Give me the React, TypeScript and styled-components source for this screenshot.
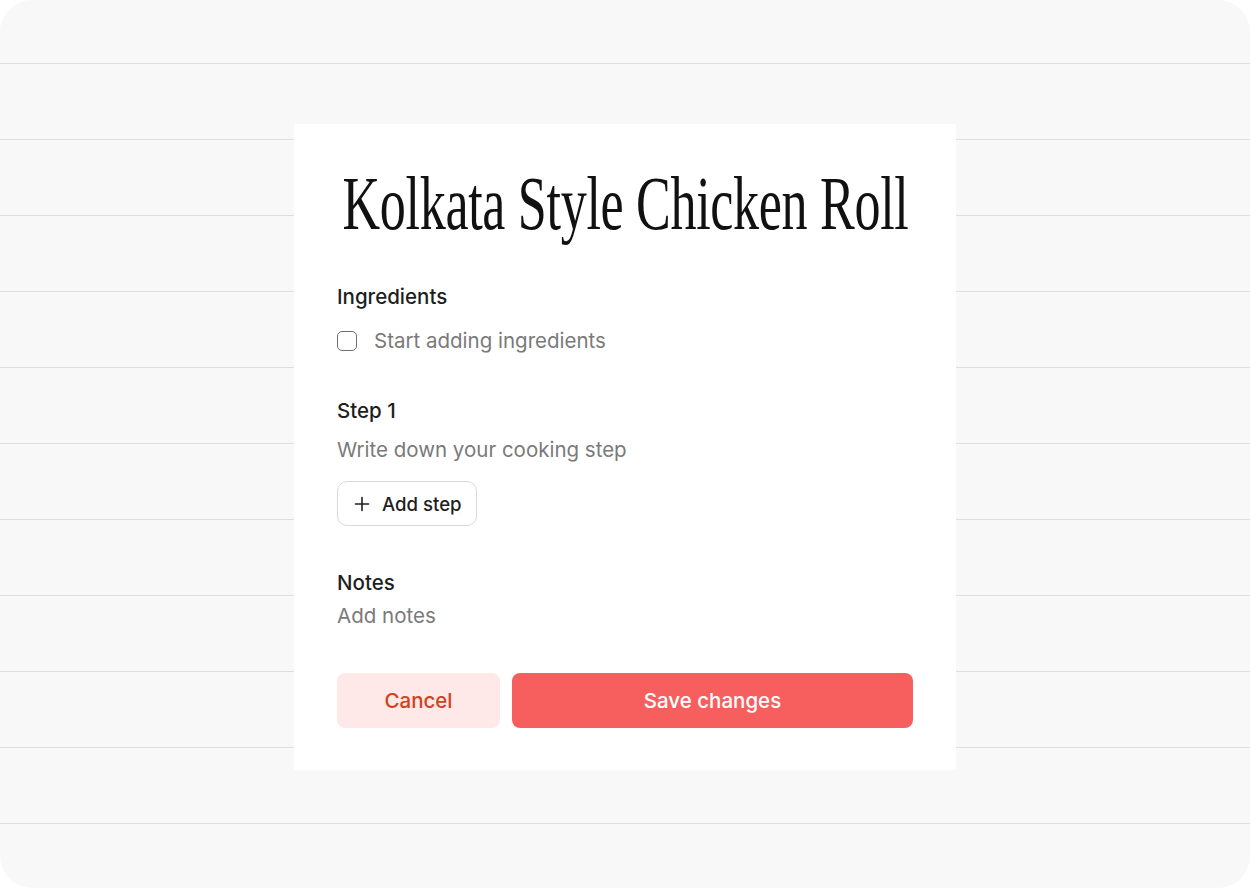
import React from 'react';
import styled, { createGlobalStyle } from 'styled-components';

const GlobalStyle = createGlobalStyle`
  html, body {
    margin: 0;
    padding: 0;
    background: #ffffff;
  }
  * {
    box-sizing: border-box;
  }
`;

const Frame = styled.div`
  width: 1250px;
  height: 888px;
  border-radius: 32px;
  overflow: hidden;
  background-color: #f8f8f8;
  background-image: repeating-linear-gradient(
    to bottom,
    transparent 0,
    transparent 63px,
    #dedede 63px,
    #dedede 64px,
    transparent 64px,
    transparent 76px
  );
  display: flex;
  justify-content: center;
  padding-top: 124px;
  font-family: Inter, 'Noto Sans', sans-serif;
`;

const Card = styled.div`
  width: 662px;
  height: 646px;
  background: #ffffff;
  padding: 39px 43px 0;
  display: flex;
  flex-direction: column;
`;

const TitleRow = styled.div`
  display: flex;
  justify-content: center;
  height: 80px;
  margin-bottom: 41px;
`;

const Title = styled.h1`
  margin: 0;
  font-family: 'Liberation Serif', 'Times New Roman', serif;
  font-weight: 400;
  font-size: 76px;
  line-height: 80px;
  color: #111111;
  white-space: nowrap;
  letter-spacing: -0.5px;
  transform: scaleX(0.686);
`;

const Section = styled.section`
  display: flex;
  flex-direction: column;
  margin-bottom: 44px;
`;

const Label = styled.div<{ $space: number }>`
  font-size: 20.5px;
  font-weight: 500;
  line-height: 26px;
  color: #1e1e1e;
  margin-bottom: ${p => p.$space}px;
`;

const Placeholder = styled.div`
  font-size: 20.5px;
  line-height: 26px;
  color: #7a7a7a;
`;

const CheckRow = styled.label`
  display: flex;
  align-items: center;
  gap: 17px;
`;

const Box = styled.span`
  width: 20px;
  height: 20px;
  border: 1.5px solid #6f6f6f;
  border-radius: 5px;
  flex-shrink: 0;
`;

const AddStepButton = styled.button`
  align-self: flex-start;
  margin-top: 18px;
  display: flex;
  align-items: center;
  gap: 12px;
  height: 45px;
  padding: 0 14px 0 16px;
  border: 1px solid #d8d8d8;
  border-radius: 10px;
  background: #ffffff;
  font-family: inherit;
  font-size: 18.6px;
  font-weight: 500;
  color: #1e1e1e;
  cursor: pointer;
`;

const Actions = styled.div`
  display: flex;
  gap: 12px;
`;

const ActionButton = styled.button<{ $primary?: boolean }>`
  height: 55px;
  border: none;
  border-radius: 8px;
  font-family: inherit;
  font-size: 20.5px;
  font-weight: 500;
  cursor: pointer;
  width: ${p => (p.$primary ? 'auto' : '163px')};
  flex: ${p => (p.$primary ? 1 : 'none')};
  background: ${p => (p.$primary ? '#f75f5f' : '#ffe8e8')};
  color: ${p => (p.$primary ? '#ffffff' : '#d3401a')};
`;

export default function App() {
  return (
    <>
      <GlobalStyle />
      <Frame>
        <Card>
          <TitleRow>
            <Title>Kolkata Style Chicken Roll</Title>
          </TitleRow>

          <Section>
            <Label $space={18}>Ingredients</Label>
            <CheckRow>
              <Box />
              <Placeholder>Start adding ingredients</Placeholder>
            </CheckRow>
          </Section>

          <Section>
            <Label $space={13}>Step 1</Label>
            <Placeholder>Write down your cooking step</Placeholder>
            <AddStepButton>
              <svg width="16" height="16" viewBox="0 0 16 16" fill="none" stroke="#1e1e1e" strokeWidth="1.6" strokeLinecap="round">
                <path d="M8 1.5v13M1.5 8h13" />
              </svg>
              Add step
            </AddStepButton>
          </Section>

          <Section>
            <Label $space={7}>Notes</Label>
            <Placeholder>Add notes</Placeholder>
          </Section>

          <Actions>
            <ActionButton>Cancel</ActionButton>
            <ActionButton $primary>Save changes</ActionButton>
          </Actions>
        </Card>
      </Frame>
    </>
  );
}
